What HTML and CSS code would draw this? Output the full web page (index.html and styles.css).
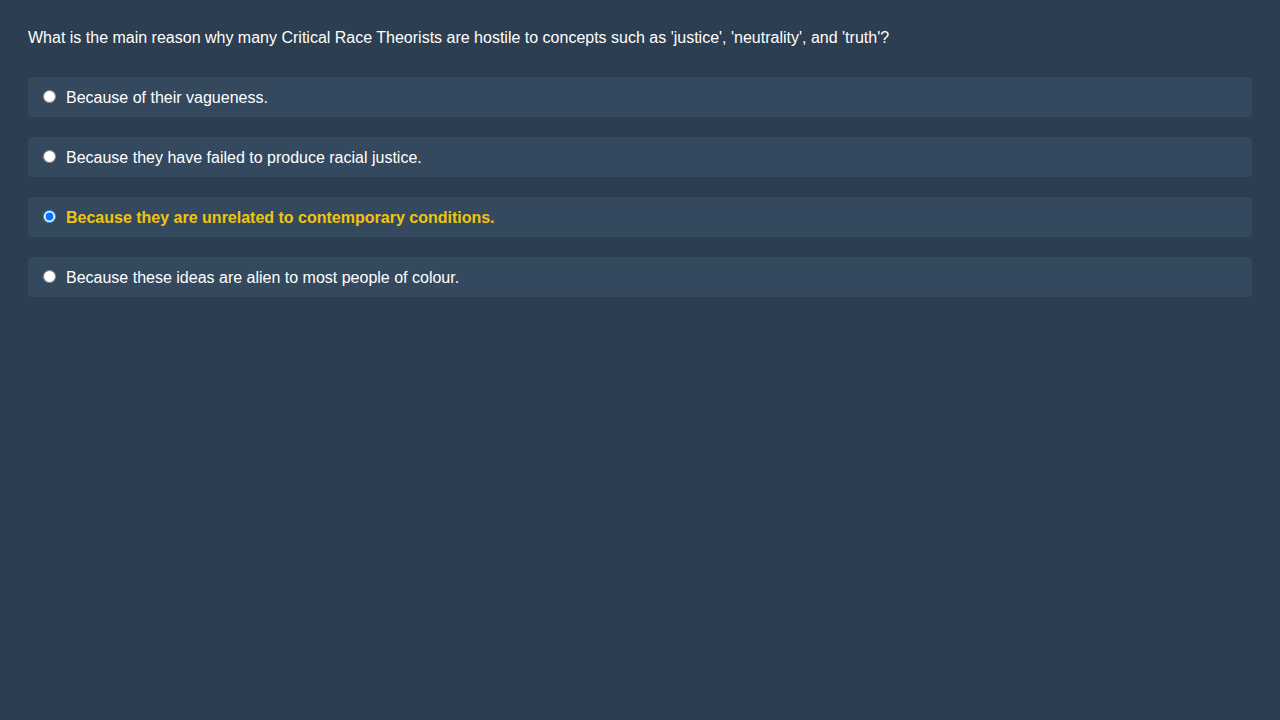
FILE: index.html
```html
<!DOCTYPE html>
<html>
<head>
<meta charset="utf-8">
<link rel="stylesheet" href="styles.css">
</head>
<body>
<div class="quiz">
  <p class="question">What is the main reason why many Critical Race Theorists are hostile to concepts such as 'justice', 'neutrality', and 'truth'?</p>
  <div class="options">
    <label class="option"><input type="radio" name="q"><span>Because of their vagueness.</span></label>
    <label class="option"><input type="radio" name="q"><span>Because they have failed to produce racial justice.</span></label>
    <label class="option selected"><input type="radio" name="q" checked><span>Because they are unrelated to contemporary conditions.</span></label>
    <label class="option"><input type="radio" name="q"><span>Because these ideas are alien to most people of colour.</span></label>
  </div>
</div>
</body>
</html>
```
FILE: styles.css
```css
html, body {
  margin: 0;
  padding: 0;
  background: #2c3e50;
  height: 100%;
}
body {
  font-family: "Liberation Sans", Arial, sans-serif;
  font-size: 16px;
  color: #ffffff;
}
.quiz {
  padding: 29px 28px 28px;
}
.question {
  margin: 0 0 30px 0;
  line-height: 18px;
}
.options {
  display: flex;
  flex-direction: column;
  gap: 20px;
}
.option {
  display: flex;
  align-items: center;
  height: 40px;
  box-sizing: border-box;
  padding: 0 10px;
  background: #34495e;
  border-radius: 4px;
  cursor: pointer;
}
.option input {
  margin: 0 10px 2px 5px;
  width: 13px;
  height: 13px;
}
.option span {
  padding-top: 2px;
}
.option.selected span {
  color: #f1c40f;
  font-weight: bold;
}
```
